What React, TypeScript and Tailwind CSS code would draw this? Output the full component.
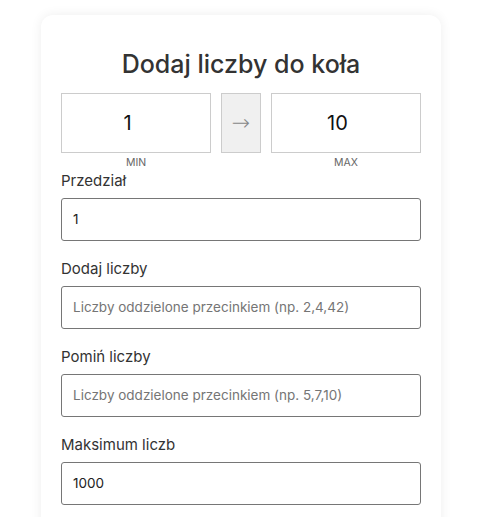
import React from 'react'

const font = { fontFamily: 'Inter, "Open Sans", sans-serif' }

// ── Field ─────────────────────────────────────────────────────────────────────

function Field({
  label,
  value,
  placeholder,
  first,
}: {
  label: string
  value?: string
  placeholder?: string
  first?: boolean
}) {
  return (
    <div className={first ? '' : 'mt-[16px]'}>
      <label className="block text-[15px] leading-6 text-[#333] mb-[5px]">{label}</label>
      <div className="flex h-[43px] items-center rounded-[3px] border border-[#767676] px-[11px]">
        {value ? (
          <span className="text-[13.5px] text-[#222]">{value}</span>
        ) : (
          <span className="text-[13.5px] text-[#757575]">{placeholder}</span>
        )}
      </div>
    </div>
  )
}

// ── Range box ─────────────────────────────────────────────────────────────────

function RangeBox({ value, caption }: { value: string; caption: string }) {
  return (
    <div className="w-[150px]">
      <div className="flex h-[60px] items-center justify-center border border-[#ccc] pr-[17px] text-[20px] text-[#111]">
        {value}
      </div>
      <div className="mt-[3px] text-center text-[10.5px] leading-[13px] text-[#666]">{caption}</div>
    </div>
  )
}

export default function App() {
  return (
    <div className="min-h-screen bg-white pt-[15px]" style={font}>
      <div className="ml-[41px] w-[400px] rounded-xl bg-white px-5 pt-[31px] pb-10 shadow-[0_0_12px_rgba(0,0,0,0.07)]">
        <h2 className="mb-[11px] text-center text-[25px] font-medium leading-9 text-[#333]">
          Dodaj liczby do koła
        </h2>

        <div className="flex items-start gap-[10px]">
          <RangeBox value="1" caption="MIN" />
          <div className="flex h-[60px] w-[40px] items-center justify-center border border-[#ccc] bg-[#f0f0f0] pb-[2px] font-['DejaVu_Sans'] text-[22px] font-light text-[#888]">
            →
          </div>
          <RangeBox value="10" caption="MAX" />
        </div>

        <Field first label="Przedział" value="1" />
        <Field label="Dodaj liczby" placeholder="Liczby oddzielone przecinkiem (np. 2,4,42)" />
        <Field label="Pomiń liczby" placeholder="Liczby oddzielone przecinkiem (np. 5,7,10)" />
        <Field label="Maksimum liczb" value="1000" />
      </div>
    </div>
  )
}
